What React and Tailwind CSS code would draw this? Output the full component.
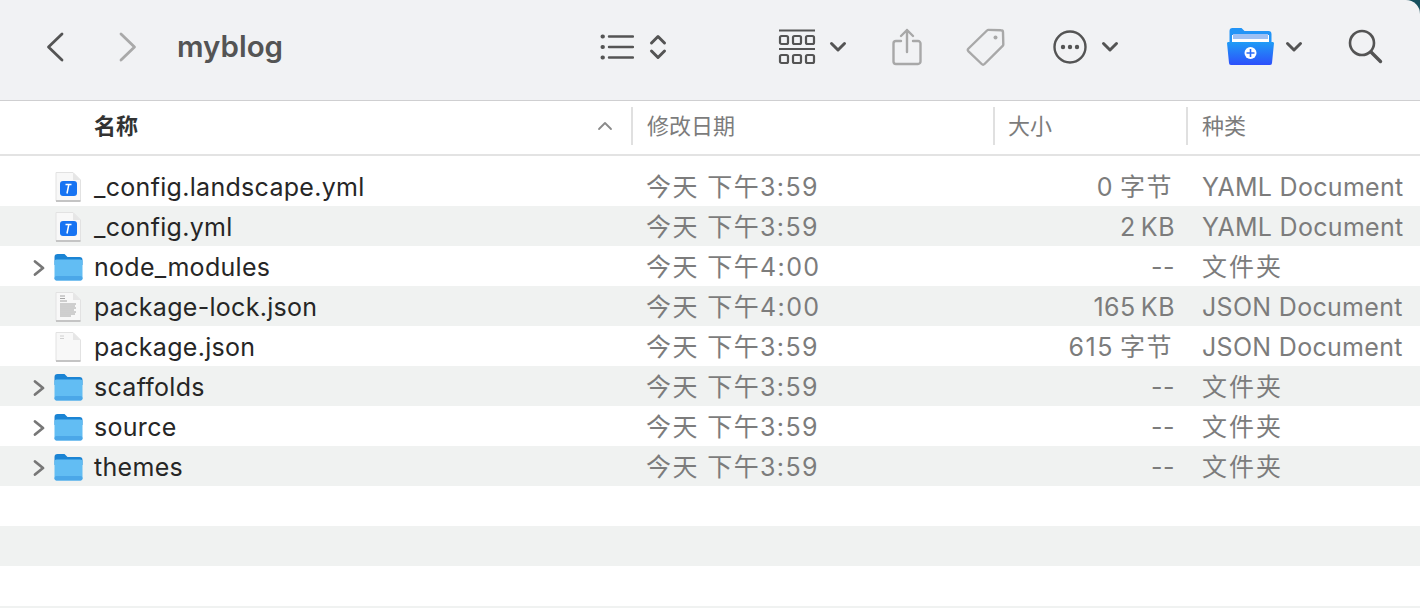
const files = [
  { name: '_config.landscape.yml', date: '今天 下午3:59', size: '0\u2009字节', kind: 'YAML Document', icon: 'yaml' },
  { name: '_config.yml', date: '今天 下午3:59', size: '2\u2009KB', kind: 'YAML Document', icon: 'yaml' },
  { name: 'node_modules', date: '今天 下午4:00', size: '--', kind: '文件夹', icon: 'folder' },
  { name: 'package-lock.json', date: '今天 下午4:00', size: '165\u2009KB', kind: 'JSON Document', icon: 'lines' },
  { name: 'package.json', date: '今天 下午3:59', size: '615\u2009字节', kind: 'JSON Document', icon: 'blank' },
  { name: 'scaffolds', date: '今天 下午3:59', size: '--', kind: '文件夹', icon: 'folder' },
  { name: 'source', date: '今天 下午3:59', size: '--', kind: '文件夹', icon: 'folder' },
  { name: 'themes', date: '今天 下午3:59', size: '--', kind: '文件夹', icon: 'folder' },
]

function FolderIcon() {
  return (
    <svg width="29" height="28" viewBox="0 0 29 28">
      <path d="M.5 4a3 3 0 0 1 3-3h7l3 3h12a3 3 0 0 1 3 3v5H.5z" fill="#1b84d4" />
      <rect x="0.5" y="6.5" width="28" height="21" rx="2" fill="#62bdf3" />
      <rect x="0.5" y="23" width="28" height="4.5" rx="2" fill="#4ba7e8" />
    </svg>
  )
}

function DocIcon({ kind }) {
  return (
    <svg width="26" height="30" viewBox="0 0 26 30">
      <path d="M1 .5h17l7.5 7.5v21H1z" fill="#f8f8f8" stroke="#e2e2e2" strokeWidth="1" />
      <path d="M18 .5V8h7.5z" fill="#e6e6e6" />
      <rect x="1" y="28" width="24.5" height="2" fill="#c4c4c4" />
      {kind === 'yaml' && (
        <>
          <rect x="5" y="9" width="17" height="15" rx="3" fill="#1673f2" />
          <path d="M12 21.5l1.8-9M10.5 12.5h6" stroke="#fff" strokeWidth="1.5" fill="none" />
        </>
      )}
      {kind === 'lines' && (
        <g stroke="#8f8f8f" strokeWidth="0.8">
          <path d="M5 4h5M5 6.5h5M5 9h7" />
          <path d="M5 12h16M5 14h15M5 16h16M5 18h14M5 20h16M5 22h15M5 24h11" />
        </g>
      )}
      {kind === 'blank' && <path d="M5 4h4M5 6.5h4" stroke="#c4c4c4" strokeWidth="0.8" />}
    </svg>
  )
}

function DownChevron({ className }) {
  return (
    <svg width="18" height="12" viewBox="0 0 18 12" className={className} fill="none" stroke="#545454" strokeWidth="3" strokeLinecap="round" strokeLinejoin="round">
      <path d="M2.5 2.5L9 9l6.5-6.5" />
    </svg>
  )
}

function Row({ file, index }) {
  const cjkSize = file.size.includes('字')
  const cjkKind = file.kind === '文件夹'
  return (
    <div className={`flex h-10 items-center pt-1 text-[25px] tracking-[0.3px] ${index % 2 === 1 ? 'bg-[#f0f2f1]' : 'bg-white'}`}>
      <div className="flex w-[94px] shrink-0 items-center">
        <div className="flex w-[46px] pl-[33px]">
          {file.icon === 'folder' && (
            <svg width="12" height="18" viewBox="0 0 12 18" fill="none" stroke="#777777" strokeWidth="2.8" strokeLinecap="round" strokeLinejoin="round">
              <path d="M2 2.5L10 9l-8 6.5" />
            </svg>
          )}
        </div>
        <div className={file.icon === 'folder' ? 'ml-[8px] -translate-y-px' : 'ml-[9px] -translate-y-px'}>
          {file.icon === 'folder' ? <FolderIcon /> : <DocIcon kind={file.icon} />}
        </div>
      </div>
      <div className="w-[552px] shrink-0 text-[#262626]">{file.name}</div>
      <div className="w-[300px] shrink-0 tracking-[1.4px] text-[#7c7c7c]">{file.date}</div>
      <div className={`w-[229px] shrink-0 text-right text-[#7c7c7c] ${cjkSize ? 'pr-[2px] tracking-[1.5px]' : 'tracking-[0.5px]'}`}>{file.size}</div>
      <div className={`ml-[27px] whitespace-nowrap text-[#7c7c7c] ${cjkKind ? 'tracking-[2px]' : ''}`}>{file.kind}</div>
    </div>
  )
}

export default function App() {
  return (
    <div className="h-[608px] w-[1420px] overflow-hidden bg-[#17505e] font-['Inter','Noto_Sans_CJK_SC',sans-serif]">
      <div className="flex h-[101px] items-center rounded-tr-[14px] border-b border-[#cfcfd1] bg-[#f1f2f4] pb-[7px] text-[#545454]">
        <svg width="18" height="30" viewBox="0 0 18 30" className="ml-[46px]" fill="none" stroke="#545454" strokeWidth="2.8" strokeLinecap="round" strokeLinejoin="round">
          <path d="M16 2L2.5 15 16 28" />
        </svg>
        <svg width="18" height="30" viewBox="0 0 18 30" className="ml-[55px]" fill="none" stroke="#a9a9a9" strokeWidth="2.8" strokeLinecap="round" strokeLinejoin="round">
          <path d="M2 2l13.5 13L2 28" />
        </svg>
        <div className="ml-[40px] w-[410px] text-[29.5px] font-semibold">myblog</div>

        <svg width="34" height="26" viewBox="0 0 34 26" className="ml-[13px]" stroke="#545454" strokeWidth="2.4" strokeLinecap="round">
          <path d="M9 2.5h24M9 13h24M9 23.5h24" />
          <path d="M2.5 2.5h.4M2.5 13h.4M2.5 23.5h.4" strokeWidth="4" />
        </svg>
        <svg width="18" height="26" viewBox="0 0 18 26" className="ml-[15px]" fill="none" stroke="#545454" strokeWidth="3" strokeLinecap="round" strokeLinejoin="round">
          <path d="M2.5 9L9 2.5 15.5 9M2.5 17L9 23.5 15.5 17" />
        </svg>

        <svg width="38" height="36" viewBox="0 0 38 36" className="ml-[111px]" fill="none" stroke="#545454">
          <path d="M1 1.5h36M1 20h36" strokeWidth="2" />
          <g strokeWidth="2.2">
            <rect x="2" y="7" width="8" height="8" rx="1.5" />
            <rect x="15" y="7" width="8" height="8" rx="1.5" />
            <rect x="28" y="7" width="8" height="8" rx="1.5" />
            <rect x="2" y="26" width="8" height="8" rx="1.5" />
            <rect x="15" y="26" width="8" height="8" rx="1.5" />
            <rect x="28" y="26" width="8" height="8" rx="1.5" />
          </g>
        </svg>
        <DownChevron className="ml-[13px]" />

        <svg width="30" height="38" viewBox="0 0 30 38" className="ml-[45px]" fill="none" stroke="#a8a8a8" strokeWidth="2.4" strokeLinecap="round" strokeLinejoin="round">
          <path d="M9 13H4a2.5 2.5 0 0 0-2.5 2.5v18A2.5 2.5 0 0 0 4 36h22a2.5 2.5 0 0 0 2.5-2.5v-18A2.5 2.5 0 0 0 26 13h-5" />
          <path d="M15 24V2M9 8l6-6 6 6" />
        </svg>

        <svg width="40" height="40" viewBox="0 0 40 40" className="ml-[44px]" fill="none" stroke="#a8a8a8" strokeWidth="2.4" strokeLinejoin="round">
          <path d="M2.5 21.5L21 3.5a2 2 0 0 1 1.5-.6l12.5.4a2 2 0 0 1 2 2l.3 12a2 2 0 0 1-.6 1.5L18.5 37a2 2 0 0 1-2.8 0L2.5 24.3a2 2 0 0 1 0-2.8z" />
          <circle cx="29.5" cy="10.5" r="2" fill="#a8a8a8" stroke="none" />
        </svg>

        <svg width="34" height="34" viewBox="0 0 34 34" className="ml-[47px]" fill="none" stroke="#545454" strokeWidth="2.4">
          <circle cx="17" cy="17" r="15.5" />
          <g fill="#545454" stroke="none">
            <circle cx="10" cy="17" r="2.2" />
            <circle cx="17" cy="17" r="2.2" />
            <circle cx="24" cy="17" r="2.2" />
          </g>
        </svg>
        <DownChevron className="ml-[14px]" />

        <svg width="47" height="37" viewBox="0 0 47 37" className="ml-[108px]">
          <defs>
            <linearGradient id="nf" x1="0" y1="0" x2="0" y2="1">
              <stop offset="0" stopColor="#1f9cf6" />
              <stop offset="1" stopColor="#2d50fb" />
            </linearGradient>
          </defs>
          <path d="M2.5 3a3 3 0 0 1 3-3h9l3 3h24a3 3 0 0 1 3 3v10h-42z" fill="#2294f7" />
          <rect x="5" y="7" width="37" height="9" fill="#ffffff" />
          <rect x="6" y="6" width="35" height="5" fill="#9dc0f4" />
          <path d="M0 15a1.5 1.5 0 0 1 1.5-1h44a1.5 1.5 0 0 1 1.5 1l-2 20a2 2 0 0 1-2 2H4a2 2 0 0 1-2-2z" fill="url(#nf)" />
          <circle cx="23.5" cy="25" r="6" fill="#fff" />
          <path d="M23.5 21v8M19.5 25h8" stroke="#2a6cf8" strokeWidth="1.6" />
        </svg>
        <DownChevron className="ml-[11px]" />

        <svg width="35" height="35" viewBox="0 0 35 35" className="ml-[45px]" fill="none" stroke="#545454" strokeLinecap="round">
          <circle cx="14" cy="14" r="12" strokeWidth="2.6" />
          <path d="M23 23l9.5 9.5" strokeWidth="3.4" />
        </svg>
      </div>

      <div className="flex h-[55px] items-center border-b-2 border-[#e3e3e3] bg-white pb-[3px] text-[22px] text-[#7c7c7c]">
        <div className="ml-[94px] w-[500px] font-semibold text-[#333333]">名称</div>
        <svg width="20" height="12" viewBox="0 0 20 12" fill="none" stroke="#8a8a8a" strokeWidth="1.8" strokeLinecap="round" strokeLinejoin="round" className="ml-[1px]">
          <path d="M4 9l6-6 6 6" />
        </svg>
        <div className="ml-[16px] h-[38px] w-[2px] bg-[#e0e0e0]" />
        <div className="ml-[14px] w-[346px]">修改日期</div>
        <div className="h-[38px] w-[2px] bg-[#e0e0e0]" />
        <div className="ml-[13px] w-[178px]">大小</div>
        <div className="h-[38px] w-[2px] bg-[#e0e0e0]" />
        <div className="ml-[14px]">种类</div>
      </div>

      <div className="bg-white pt-[10px]">
        {files.map((file, i) => (
          <Row key={file.name} file={file} index={i} />
        ))}
        <div className="h-10 bg-white" />
        <div className="h-10 bg-[#f0f2f1]" />
        <div className="h-10 bg-white" />
        <div className="h-[2px] bg-[#f0f2f1]" />
      </div>
    </div>
  )
}
